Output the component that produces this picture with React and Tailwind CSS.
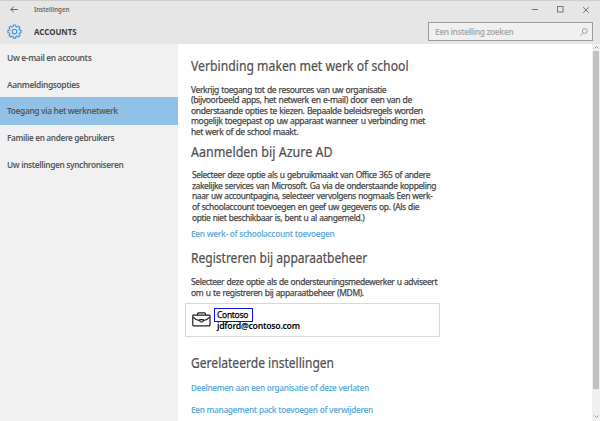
import { useLayoutEffect, useRef, useState } from "react";
import clsx from "clsx";

// A single line of text, condensed to the given width.
function Line({ w, className, children }) {
  const ref = useRef(null);
  const [scale, setScale] = useState(1);
  useLayoutEffect(() => {
    setScale(w / ref.current.offsetWidth);
  }, [w]);
  return (
    <span className={clsx("block whitespace-nowrap", className)}>
      <span ref={ref} className="inline-block origin-left" style={{ transform: `scaleX(${scale})` }}>
        {children}
      </span>
    </span>
  );
}

const NAV = [
  ["Uw e-mail en accounts", 84],
  ["Aanmeldingsopties", 73],
  ["Toegang via het werknetwerk", 110.5],
  ["Familie en andere gebruikers", 107.5],
  ["Uw instellingen synchroniseren", 116.5],
];

const INTRO = [
  ["Verkrijg toegang tot de resources van uw organisatie", 195.5],
  ["(bijvoorbeeld apps, het netwerk en e-mail) door een van de", 220.5],
  ["onderstaande opties te kiezen. Bepaalde beleidsregels worden", 232],
  ["mogelijk toegepast op uw apparaat wanneer u verbinding met", 233.5],
  ["het werk of de school maakt.", 107],
];

const AZURE = [
  ["Selecteer deze optie als u gebruikmaakt van Office 365 of andere", 238],
  ["zakelijke services van Microsoft. Ga via de onderstaande koppeling", 244.5],
  ["naar uw accountpagina, selecteer vervolgens nogmaals Een werk-", 240.5],
  ["of schoolaccount toevoegen en geef uw gegevens op. (Als die", 227.5],
  ["optie niet beschikbaar is, bent u al aangemeld.)", 172.5],
];

const MDM = [
  ["Selecteer deze optie als de ondersteuningsmedewerker u adviseert", 246],
  ["om u te registreren bij apparaatbeheer (MDM).", 172.5],
];

function Heading({ w, className, children }) {
  return (
    <h2 className={clsx("text-[13.5px] leading-[20px] text-[#505050] [-webkit-text-stroke:0.2px_#505050]", className)}>
      <Line w={w}>{children}</Line>
    </h2>
  );
}

function Para({ lines, className }) {
  return (
    <p className={clsx("text-[9.2px] tracking-[-0.4px] [word-spacing:0.6px] text-[#484848] [-webkit-text-stroke:0.25px_#484848]", className)}>
      {lines.map(([t, w]) => (
        <Line key={t} w={w}>{t}</Line>
      ))}
    </p>
  );
}

function Link({ w, className, children }) {
  return (
    <a className={clsx("block text-[9.2px] leading-[11px] font-semibold tracking-[-0.4px] [word-spacing:0.3px] text-[#62addb]", className)}>
      <Line w={w}>{children}</Line>
    </a>
  );
}

function Gear() {
  return (
    <svg className="size-[15px]" viewBox="0 0 15 15" fill="none" stroke="#3f97d8" strokeWidth="1.15" strokeLinejoin="round">
      <path d="M6.3 1h2.4l.3 1.7 1 .4 1.4-1 1.6 1.6-1 1.4.4 1 1.7.3v2.3l-1.7.3-.4 1 1 1.4-1.6 1.6-1.4-1-1 .4-.3 1.7H6.3L6 12.400l-1-.4-1.400 1L2 11.400l1-1.400-.4-1L.9 8.700V6.400l1.700-.3.4-1-1-1.400 1.600-1.600 1.400 1 1-.4z" />
      <circle cx="7.500" cy="7.500" r="2.300" />
    </svg>
  );
}

function Briefcase() {
  return (
    <svg className="h-[15px] w-[19px]" viewBox="0 0 19 15" fill="none" stroke="#222" strokeWidth="1.200">
      <rect x=".8" y="3.200" width="17.200" height="10.600" rx=".5" />
      <path d="M5.500 3.200V1.900q0-1 1-1h6q1 0 1 1v1.300M1 5.200c2 2.300 4.500 3.200 6.800 3.500M17.800 5.200c-2 2.300-4.500 3.200-6.600 3.500" />
      <path d="M7.800 7.700h3.400v1.300q-1.700 2.400-3.400 0z" />
    </svg>
  );
}

export default function App() {
  return (
    <div className="flex h-[421px] w-[600px] flex-col overflow-hidden bg-white font-['Noto_Sans','Open_Sans',sans-serif]">
      <header className="h-[44px] shrink-0 border-t border-[#cfcfcf] bg-[#e6e6e6]">
        <div className="flex h-[17px] items-center pr-[11px] pl-[10px]">
          <svg className="h-[7px] w-[8px]" viewBox="0 0 8 7" fill="none" stroke="#555" strokeWidth=".9">
            <path d="M7.500 3.500H1M3.700.7L.9 3.500l2.800 2.800" />
          </svg>
          <Line w={35.500} className="ml-[16px] text-[7px] leading-[9px] font-semibold text-[#666]">Instellingen</Line>
          <div className="ml-auto flex items-center gap-[19px] text-[#777]">
            <svg className="h-[7px] w-[6px]" viewBox="0 0 6 7" stroke="currentColor">
              <path d="M0 3.500h6" />
            </svg>
            <svg className="size-[7px]" viewBox="0 0 7 7" fill="none" stroke="currentColor">
              <rect x=".5" y=".5" width="5.500" height="5.500" />
            </svg>
            <svg className="size-[6px]" viewBox="0 0 6 6" stroke="currentColor" strokeWidth="1">
              <path d="M.2.2l5.600 5.600M5.800.2L.2 5.800" />
            </svg>
          </div>
        </div>
        <div className="flex h-[27px] items-center pr-[7px] pl-[7px]">
          <Gear />
          <Line w={43} className="ml-[12px] text-[9px] leading-[12px] font-bold text-[#404040]">ACCOUNTS</Line>
          <div className="ml-auto flex h-[19px] w-[165px] items-center border border-[#9c9c9c] bg-[#f0f0f0] pr-[4px] pl-[6px]">
            <Line w={78} className="text-[9.2px] leading-[12px] font-semibold tracking-[-0.4px] text-[#aaa]">Een instelling zoeken</Line>
            <svg className="ml-auto size-[8px]" viewBox="0 0 8 8" fill="none" stroke="#999" strokeWidth=".9">
              <circle cx="4.800" cy="3" r="2.400" />
              <path d="M3.100 4.800L.3 7.600" />
            </svg>
          </div>
        </div>
      </header>

      <div className="flex min-h-0 flex-1">
        <nav className="w-[178px] shrink-0 bg-[#f1f1f1]">
          {NAV.map(([label, w], i) => (
            <div
              key={label}
              className={clsx(
                "flex items-center pl-[7px] text-[9.2px] leading-[12px] font-semibold tracking-[-0.4px] text-[#5a5a5a]",
                i === 2 && "-mt-px h-[28px] bg-[#91c1e7]",
                i === 3 && "h-[26px]",
                i !== 2 && i !== 3 && "h-[27px]"
              )}
            >
              <Line w={w}>{label}</Line>
            </div>
          ))}
        </nav>

        <main className="w-[414px] shrink-0 pt-[12px] pl-[13px]">
          <Heading w={218}>Verbinding maken met werk of school</Heading>
          <Para lines={INTRO} className="mt-[8.500px] leading-[10.650px]" />
          <Heading w={141.500} className="mt-[4.250px]">Aanmelden bij Azure AD</Heading>
          <Para lines={AZURE} className="mt-[7.800px] pl-[0.5px] leading-[10.800px]" />
          <Link w={143} className="mt-[4.200px]">Een werk- of schoolaccount toevoegen</Link>
          <Heading w={176.500} className="mt-[8.800px]">Registreren bij apparaatbeheer</Heading>
          <Para lines={MDM} className="mt-[9.500px] leading-[10.500px]" />
          <div className="mt-[4.700px] -ml-[6px] flex h-[34px] w-[254.5px] items-center border border-[#d9d9d9] pl-[6px]">
            <Briefcase />
            <div className="ml-[3px] text-[9px] tracking-[-0.3px] text-black">
              <div className="h-[14px] w-[39px] border border-[#1010f0] pl-[2px] leading-[12px] [-webkit-text-stroke:0.25px_black]">
                <Line w={31}>Contoso</Line>
              </div>
              <Line w={82.500} className="-mt-px pl-[3px] leading-[10px] font-semibold">jdford@contoso.com</Line>
            </div>
          </div>
          <Heading w={143} className="mt-[16px]">Gerelateerde instellingen</Heading>
          <Link w={177.500} className="mt-[9px]">Deelnemen aan een organisatie of deze verlaten</Link>
          <Link w={182} className="mt-[11px]">Een management pack toevoegen of verwijderen</Link>
        </main>

        <div className="flex w-[8px] flex-col items-center bg-[#f0f0f0]">
          <svg className="my-[2px] h-[3px] w-[5px]" viewBox="0 0 5 3" fill="none" stroke="#999">
            <path d="M.5 2.500l2-2 2 2" />
          </svg>
          <div className="h-[338px] w-[6px] bg-[#c1c1c1]" />
          <svg className="mt-auto mb-[3px] h-[3px] w-[5px]" viewBox="0 0 5 3" fill="none" stroke="#999">
            <path d="M.5.5l2 2 2-2" />
          </svg>
        </div>
      </div>
    </div>
  );
}
